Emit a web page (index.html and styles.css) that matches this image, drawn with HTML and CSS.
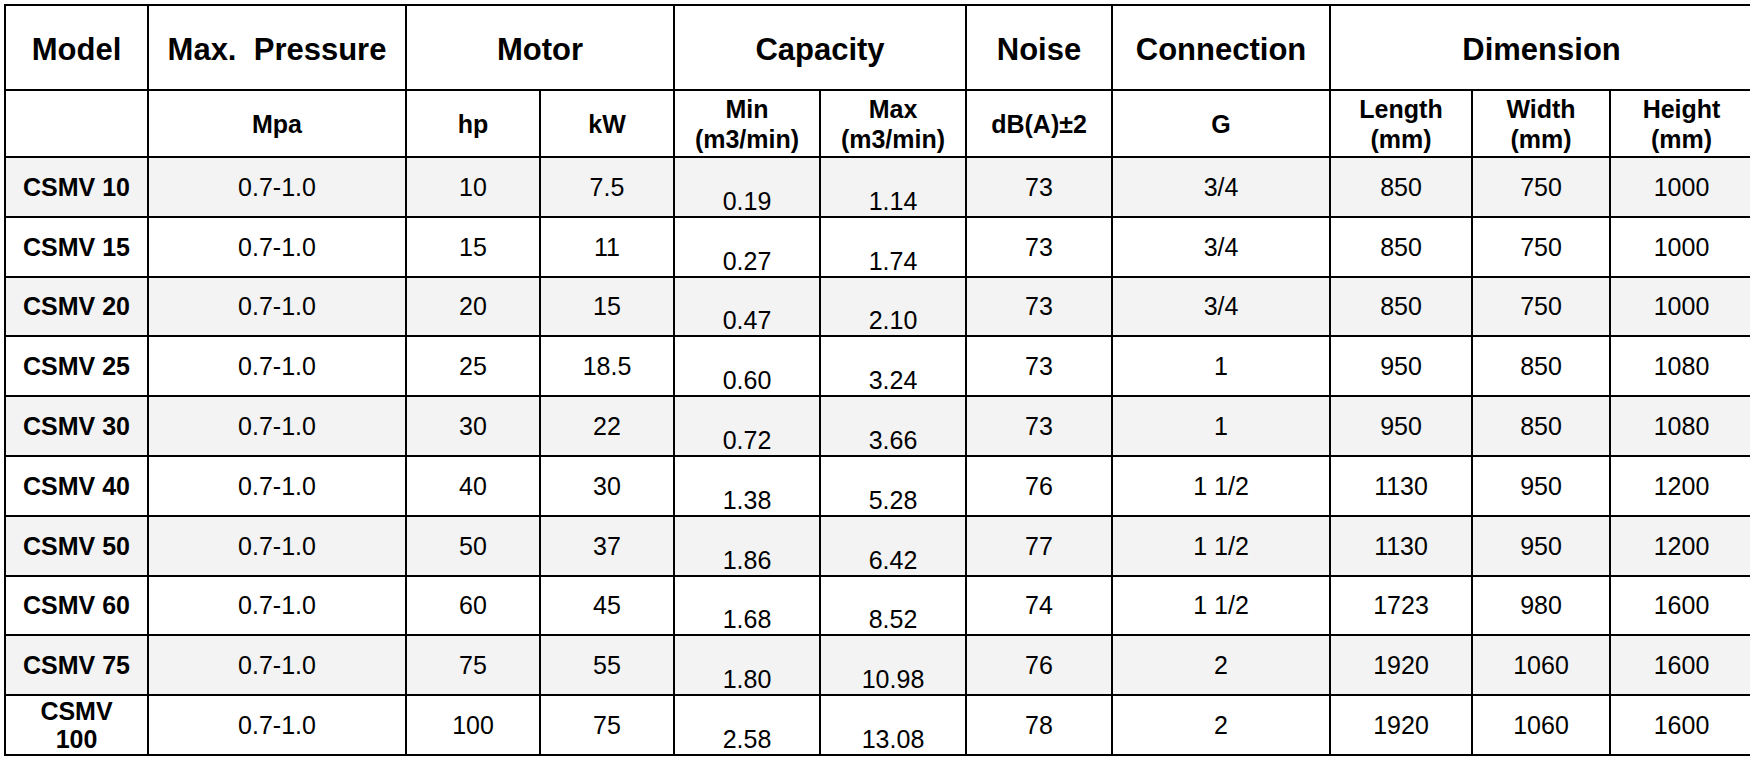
FILE: index.html
```html
<!DOCTYPE html>
<html lang="en">
<head>
    <meta charset="UTF-8">
    <meta name="viewport" content="width=device-width, initial-scale=1.0">
    <title>CSMV Specifications</title>
    <link rel="stylesheet" href="styles.css">
</head>
<body>
    <table class="spec">
        <colgroup>
            <col class="c-model">
            <col class="c-press">
            <col class="c-hp">
            <col class="c-kw">
            <col class="c-cap">
            <col class="c-cap">
            <col class="c-noise">
            <col class="c-conn">
            <col class="c-len">
            <col class="c-wid">
            <col class="c-hei">
        </colgroup>
        <tr class="head">
            <th>Model</th>
            <th>Max.&nbsp; Pressure</th>
            <th colspan="2">Motor</th>
            <th colspan="2">Capacity</th>
            <th>Noise</th>
            <th>Connection</th>
            <th colspan="3">Dimension</th>
        </tr>
        <tr class="sub">
            <th></th>
            <th>Mpa</th>
            <th>hp</th>
            <th>kW</th>
            <th>Min<br>(m3/min)</th>
            <th>Max<br>(m3/min)</th>
            <th>dB(A)±2</th>
            <th>G</th>
            <th>Length<br>(mm)</th>
            <th>Width<br>(mm)</th>
            <th>Height<br>(mm)</th>
        </tr>
        <tr class="row odd">
            <td class="model">CSMV 10</td><td>0.7-1.0</td><td>10</td><td>7.5</td>
            <td class="cap">0.19</td><td class="cap">1.14</td><td>73</td><td>3/4</td>
            <td>850</td><td>750</td><td>1000</td>
        </tr>
        <tr class="row">
            <td class="model">CSMV 15</td><td>0.7-1.0</td><td>15</td><td>11</td>
            <td class="cap">0.27</td><td class="cap">1.74</td><td>73</td><td>3/4</td>
            <td>850</td><td>750</td><td>1000</td>
        </tr>
        <tr class="row odd">
            <td class="model">CSMV 20</td><td>0.7-1.0</td><td>20</td><td>15</td>
            <td class="cap">0.47</td><td class="cap">2.10</td><td>73</td><td>3/4</td>
            <td>850</td><td>750</td><td>1000</td>
        </tr>
        <tr class="row">
            <td class="model">CSMV 25</td><td>0.7-1.0</td><td>25</td><td>18.5</td>
            <td class="cap">0.60</td><td class="cap">3.24</td><td>73</td><td>1</td>
            <td>950</td><td>850</td><td>1080</td>
        </tr>
        <tr class="row odd">
            <td class="model">CSMV 30</td><td>0.7-1.0</td><td>30</td><td>22</td>
            <td class="cap">0.72</td><td class="cap">3.66</td><td>73</td><td>1</td>
            <td>950</td><td>850</td><td>1080</td>
        </tr>
        <tr class="row">
            <td class="model">CSMV 40</td><td>0.7-1.0</td><td>40</td><td>30</td>
            <td class="cap">1.38</td><td class="cap">5.28</td><td>76</td><td>1 1/2</td>
            <td>1130</td><td>950</td><td>1200</td>
        </tr>
        <tr class="row odd">
            <td class="model">CSMV 50</td><td>0.7-1.0</td><td>50</td><td>37</td>
            <td class="cap">1.86</td><td class="cap">6.42</td><td>77</td><td>1 1/2</td>
            <td>1130</td><td>950</td><td>1200</td>
        </tr>
        <tr class="row">
            <td class="model">CSMV 60</td><td>0.7-1.0</td><td>60</td><td>45</td>
            <td class="cap">1.68</td><td class="cap">8.52</td><td>74</td><td>1 1/2</td>
            <td>1723</td><td>980</td><td>1600</td>
        </tr>
        <tr class="row odd">
            <td class="model">CSMV 75</td><td>0.7-1.0</td><td>75</td><td>55</td>
            <td class="cap">1.80</td><td class="cap">10.98</td><td>76</td><td>2</td>
            <td>1920</td><td>1060</td><td>1600</td>
        </tr>
        <tr class="row">
            <td class="model">CSMV 100</td><td>0.7-1.0</td><td>100</td><td>75</td>
            <td class="cap">2.58</td><td class="cap">13.08</td><td>78</td><td>2</td>
            <td>1920</td><td>1060</td><td>1600</td>
        </tr>
    </table>
</body>
</html>
```

FILE: styles.css
```css
body{
    margin: 4px;
    background-color: #ffffff;
    color: #000000;
    font-family: "Liberation Sans", Arial, Helvetica, sans-serif;
}
.spec{
    width: 1748px;
    table-layout: fixed;
    border-collapse: collapse;
    border: 2px solid #000000;
}
.c-model{ width: 143px; }
.c-press{ width: 258px; }
.c-hp{ width: 134px; }
.c-kw{ width: 134px; }
.c-cap{ width: 146px; }
.c-noise{ width: 146px; }
.c-conn{ width: 218px; }
.c-len{ width: 142px; }
.c-wid{ width: 138px; }
.c-hei{ width: 143px; }
th, td{
    border: 2px solid #000000;
    padding: 0 12px;
    text-align: center;
    vertical-align: middle;
    font-size: 25px;
    line-height: 1.2;
}
th{
    font-weight: bold;
}
.head{
    height: 85px;
}
.head th{
    font-size: 31px;
    padding-top: 4px;
}
.sub{
    height: 67px;
}
.row{
    height: 59.8px;
}
.odd{
    background-color: #f3f3f3;
}
.model{
    font-weight: bold;
    line-height: 1.12;
}
.cap{
    vertical-align: bottom;
    padding-bottom: 0;
}
```
